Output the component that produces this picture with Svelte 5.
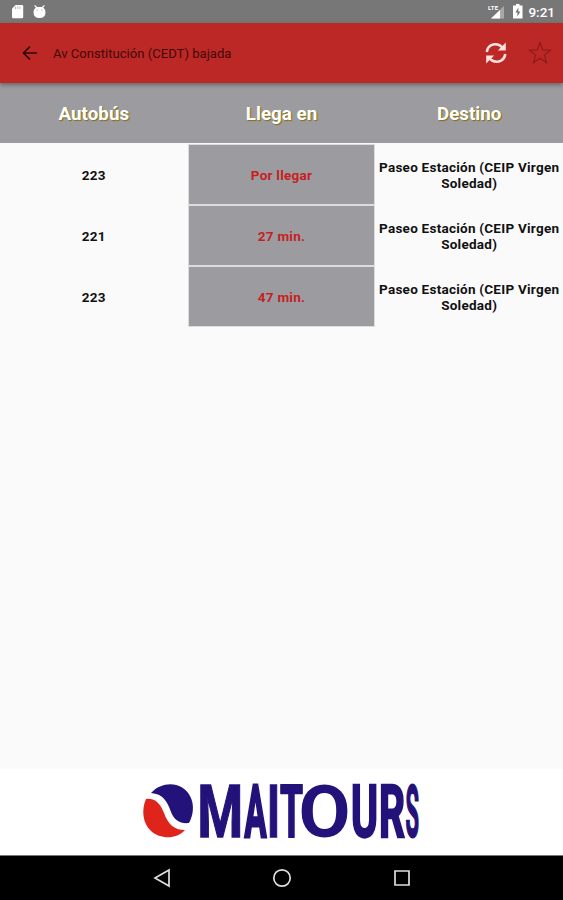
<script lang="ts">
	interface Arrival {
		line: string;
		eta: string;
		destination: string;
	}

	const stop = 'Av Constitución (CEDT) bajada';
	const columns = ['Autobús', 'Llega en', 'Destino'];
	const arrivals: Arrival[] = [
		{ line: '223', eta: 'Por llegar', destination: 'Paseo Estación (CEIP Virgen Soledad)' },
		{ line: '221', eta: '27 min.', destination: 'Paseo Estación (CEIP Virgen Soledad)' },
		{ line: '223', eta: '47 min.', destination: 'Paseo Estación (CEIP Virgen Soledad)' }
	];

	// the wordmark has its own letter widths and stem weights
	const wordmark = [
		{ char: 'M', x: 54.5, width: 45.5, stroke: 1.5 },
		{ char: 'A', x: 101.5, width: 22, stroke: 3 },
		{ char: 'I', x: 124, width: 13, stroke: 1.6 },
		{ char: 'T', x: 137, width: 23, stroke: 2 },
		{ char: 'O', x: 155.5, width: 52, stroke: 0 },
		{ char: 'U', x: 208, width: 27, stroke: 2.5 },
		{ char: 'R', x: 236, width: 26, stroke: 2.5 },
		{ char: 'S', x: 262.5, width: 13.5, stroke: 2 }
	];
</script>

<div class="screen">
	<div class="status">
		<svg class="notifications" width="40" height="16" viewBox="0 0 40 16" fill="#fff">
			<path d="M4.5 1H11q1.2 0 1.2 1.2V13q0 1.2-1.2 1.2H2.2Q1 14.2 1 13V4.8z" />
			<path d="M4.5 2.5v2.5M6.8 2.5v2.5M9 2.5v2.5" stroke="#bbb" stroke-width="1" />
			<path d="M24 1l2 2h5l2-2 .8.6-1.6 2.2q2.3 1.6 2.3 4.2 0 6-6 6t-6-6q0-2.6 2.3-4.2L23.2 1.6z" />
			<path d="M25.5 6h1.2M30.3 6h1.2" stroke="#aaa" />
		</svg>
		<div class="system">
			<svg width="38" height="20" viewBox="0 0 38 20">
				<text class="network" x="2" y="10" textLength="10">LTE</text>
				<path d="M18 6v12.500H5z" fill="#a9a9a9" />
				<path d="M14 10v8.500H5z" fill="#fff" />
				<path d="M27 5.500h3V4h3.500v1.500h3v13H27z" fill="#fff" />
				<path d="M32.400 7.500l-3 5h2v4l3-5h-2z" fill="#777" />
			</svg>
			<span>9:21</span>
		</div>
	</div>

	<header>
		<button aria-label="Atrás">
			<svg width="16" height="16" viewBox="0 0 16 16" fill="none" stroke="#2e0808" stroke-width="1.7">
				<path d="M15 8H2M8 1.500L1.500 8 8 14.500" />
			</svg>
		</button>
		<h1>{stop}</h1>
		<button aria-label="Actualizar">
			<svg width="24" height="24" viewBox="0 0 24 24" fill="none" stroke="#ffe1dd" stroke-width="2.6">
				<path d="M2.800 11C3.500 4.500 10 1.300 16 4.500l2.500 2M21.200 13C20.500 19.500 14 22.700 8 19.500l-2.500-2" />
				<path d="M21.800 1.500v8h-8zM2.200 22.500v-8h8z" fill="#ffe1dd" stroke="none" />
			</svg>
		</button>
		<button class="favorite" aria-label="Favorito">
			<svg width="24" height="24" viewBox="0 0 24 24" fill="none" stroke="#8c1a1a" stroke-width="1.2">
				<path d="M12 1.800l2.700 7.100 7.800.300-6.100 4.900 2.100 7.600-6.500-4.400-6.500 4.400 2.100-7.600-6.100-4.900 7.800-.300z" />
			</svg>
		</button>
	</header>

	<main>
		<div class="row head">
			{#each columns as column}
				<div>{column}</div>
			{/each}
		</div>
		{#each arrivals as arrival}
			<div class="row">
				<div>{arrival.line}</div>
				<div class="eta">{arrival.eta}</div>
				<div>{arrival.destination}</div>
			</div>
		{/each}
	</main>

	<footer>
		<svg width="277" height="60" viewBox="0 0 277 60" role="img" aria-label="MAITOURS">
			<path d="M8 11C20-2 40 0 47 14c5 9 3 20-1 27-9 1-15-3-18-11-4-11-8-18-20-19z" fill="#24127b" />
			<path d="M3 17c9-1 14 4 18 14 4 11 10 17 21 17-9 10-25 9-34 1C0 42-2 28 3 17z" fill="#df241b" />
			<text class="wordmark" y="55">
				{#each wordmark as letter}<tspan x={letter.x} textLength={letter.width} lengthAdjust="spacingAndGlyphs" stroke-width={letter.stroke}>{letter.char}</tspan>{/each}
			</text>
		</svg>
	</footer>

	<nav>
		<svg width="20" height="20" viewBox="0 0 20 20"><path d="M17 2v16L3 10z" /></svg>
		<svg width="20" height="20" viewBox="0 0 20 20"><circle cx="10" cy="10" r="8.2" /></svg>
		<svg width="20" height="20" viewBox="0 0 20 20"><path d="M3 3h14v14H3z" /></svg>
	</nav>
</div>

<style>
	:global(body) {
		margin: 0;
	}
	.screen {
		display: flex;
		flex-direction: column;
		height: 900px;
		overflow: hidden;
		background: #fafafa;
		color: #111;
		font-family: Roboto, sans-serif;
	}
	.status {
		display: flex;
		flex: none;
		justify-content: space-between;
		height: 23px;
		box-sizing: border-box;
		padding: 0 8px 0 11px;
		background: #777;
	}
	.notifications {
		margin-top: 4px;
	}
	.system {
		display: flex;
		gap: 4px;
		color: #fff;
		font-size: 13.5px;
		font-weight: 500;
		line-height: 25px;
	}
	.network {
		fill: #fff;
		font-size: 6px;
		font-weight: 700;
	}
	header {
		display: flex;
		z-index: 1;
		flex: none;
		align-items: center;
		height: 60px;
		box-sizing: border-box;
		padding: 0 11px 0 22px;
		background: #bb2826;
		box-shadow: 0 2px 4px rgba(0, 0, 0, 0.35);
	}
	button {
		display: flex;
		padding: 0;
		border: 0;
		background: none;
	}
	.favorite {
		margin-left: 20px;
	}
	h1 {
		flex: 1;
		margin: 0 0 0 15px;
		color: #430909;
		font-size: 13.1px;
		font-weight: 400;
	}
	main {
		flex: 1;
	}
	.row {
		display: grid;
		grid-template-columns: repeat(3, 1fr);
		height: 61px;
	}
	.row > div {
		display: flex;
		align-items: center;
		justify-content: center;
		box-sizing: border-box;
		font-size: 13.5px;
		font-weight: 700;
		letter-spacing: 0.25px;
		line-height: 16px;
		text-align: center;
	}
	.row.head {
		height: 60px;
		margin-bottom: 1px;
		background: #9c9b9f;
	}
	.row.head > div {
		padding-top: 2px;
		color: #fff;
		font-size: 18.8px;
		letter-spacing: 0;
		text-shadow: 1px 1px 1px #86700f;
	}
	.row > .eta {
		border: 1px solid #dcdcde;
		background: #9c9b9f;
		color: #c61f1f;
	}
	footer {
		display: flex;
		flex: none;
		justify-content: center;
		height: 86px;
		box-sizing: border-box;
		padding-top: 13px;
		background: #fff;
	}
	footer svg {
		overflow: visible;
	}
	.wordmark {
		fill: #24127b;
		stroke: #24127b;
		font-size: 73px;
		font-weight: 700;
	}
	nav {
		display: flex;
		flex: none;
		align-items: center;
		justify-content: center;
		gap: 100px;
		height: 45px;
		box-sizing: border-box;
		border-top: 1px solid #777;
		background: #000;
	}
	nav svg {
		fill: none;
		stroke: #dedede;
		stroke-width: 1.7;
	}
</style>
